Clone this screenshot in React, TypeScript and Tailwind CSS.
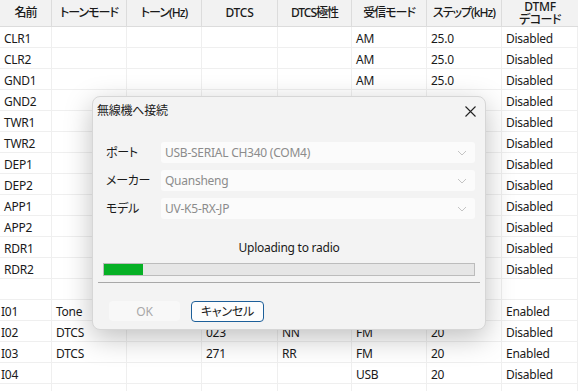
import React from 'react';

const cols = 'grid grid-cols-[52px_75px_75px_76px_74px_75px_75px_76px]';
const font = "font-['Noto_Sans','Noto_Sans_CJK_JP',sans-serif] [font-feature-settings:'palt'_1] tracking-[-0.25px]";

const headers = ['名前', 'トーンモード', 'トーン(Hz)', 'DTCS', 'DTCS極性', '受信モード', 'ステップ(kHz)'];

type Row = string[];

const rows: Row[] = [
  ['CLR1', '', '', '', '', 'AM', '25.0', 'Disabled'],
  ['CLR2', '', '', '', '', 'AM', '25.0', 'Disabled'],
  ['GND1', '', '', '', '', 'AM', '25.0', 'Disabled'],
  ['GND2', '', '', '', '', 'AM', '25.0', 'Disabled'],
  ['TWR1', '', '', '', '', 'AM', '25.0', 'Disabled'],
  ['TWR2', '', '', '', '', 'AM', '25.0', 'Disabled'],
  ['DEP1', '', '', '', '', 'AM', '25.0', 'Disabled'],
  ['DEP2', '', '', '', '', 'AM', '25.0', 'Disabled'],
  ['APP1', '', '', '', '', 'AM', '25.0', 'Disabled'],
  ['APP2', '', '', '', '', 'AM', '25.0', 'Disabled'],
  ['RDR1', '', '', '', '', 'AM', '25.0', 'Disabled'],
  ['RDR2', '', '', '', '', 'AM', '25.0', 'Disabled'],
  ['', '', '', '', '', '', '', ''],
  ['I01', 'Tone', '', '', '', '', '', 'Enabled'],
  ['I02', 'DTCS', '', '023', 'NN', 'FM', '20', 'Disabled'],
  ['I03', 'DTCS', '', '271', 'RR', 'FM', '20', 'Enabled'],
  ['I04', '', '', '', '', 'USB', '20', 'Disabled'],
  ['', '', '', '', '', '', '', ''],
];

function Combo({ value }: { value: string }) {
  return (
    <div className="flex h-[21px] w-[314px] items-center justify-between rounded-[3px] bg-[#fbfbfb] pl-[4px] pr-[8px] pt-[1px] text-[#8c8c8c]">
      <span>{value}</span>
      <svg width="10" height="6" viewBox="0 0 10 6" fill="none" stroke="#c4c4c4" strokeWidth="1">
        <path d="M1 1l4 4 4-4" />
      </svg>
    </div>
  );
}

function ConnectDialog() {
  return (
    <div className="absolute left-[92px] top-[96px] flex h-[234px] w-[394px] flex-col rounded-[8px] border border-[#d6d6d6] bg-[#f3f3f3] shadow-[0_8px_28px_rgba(0,0,0,0.25)]">
      <div className="flex h-[27px] items-center justify-between pl-[4px] pr-[9px] pt-[1px]">
        <span className="text-[#1a1a1a]">無線機へ接続</span>
        <svg width="11" height="11" viewBox="0 0 11 11" stroke="#222" strokeWidth="1.1">
          <path d="M0.5 0.5l10 10M10.5 0.5l-10 10" />
        </svg>
      </div>
      <div className="mt-[18px] flex flex-col gap-[7px] pl-[13px]">
        {[
          ['ポート', 'USB-SERIAL CH340 (COM4)'],
          ['メーカー', 'Quansheng'],
          ['モデル', 'UV-K5-RX-JP'],
        ].map(([label, value]) => (
          <div key={label} className="flex items-center">
            <span className="w-[55px] text-[#1a1a1a]">{label}</span>
            <Combo value={value} />
          </div>
        ))}
      </div>
      <div className="mt-[23px] text-center text-[#1a1a1a]">Uploading to radio</div>
      <div className="mx-[10px] mt-[9px] h-[13px] border border-[#bcbcbc] bg-[#e6e6e6]">
        <div className="h-full w-[39px] bg-[#06b025]" />
      </div>
      <div className="mx-[5px] mt-[6px] h-px bg-[#a8a8a8]" />
      <div className="mt-[18px] flex gap-[11px] pl-[16px]">
        <div className="flex h-[20px] w-[71px] items-center justify-center rounded-[4px] bg-[#f8f8f8] pt-[1px] text-[#a8a8a8]">OK</div>
        <div className="flex h-[21px] w-[73px] items-center justify-center rounded-[4px] border border-[#1d5f99] bg-[#fdfdfd] text-[#1a1a1a]">キャンセル</div>
      </div>
    </div>
  );
}

export default function App() {
  return (
    <div className={`relative h-[391px] w-[578px] overflow-hidden bg-white text-[12px] leading-none text-[#1a1a1a] ${font}`}>
      <div className={`${cols} h-[27px] border-b border-[#dcdcdc] bg-[#f2f2f2] font-medium`}>
        {headers.map((h) => (
          <div
            key={h}
            className={`flex items-center justify-center border-r border-[#dcdcdc] ${/^[\x00-\x7f]+$/.test(h) ? '' : 'tracking-[-1px]'}`}
          >
            {h}
          </div>
        ))}
        <div className="flex flex-col items-center justify-center leading-[13px]">
          <span>DTMF</span>
          <span className="tracking-[-0.5px]">デコード</span>
        </div>
      </div>
      {rows.map((r, i) => (
        <div key={i} className={`${cols} h-[21px]`}>
          {r.map((c, j) => (
            <div
              key={j}
              className={`flex items-center border-b border-r border-[#efefef] pt-[4px] ${j === 0 && c.startsWith('I') ? 'pl-[1px]' : 'pl-[4px]'}`}
            >
              {c}
            </div>
          ))}
        </div>
      ))}
      <ConnectDialog />
    </div>
  );
}
